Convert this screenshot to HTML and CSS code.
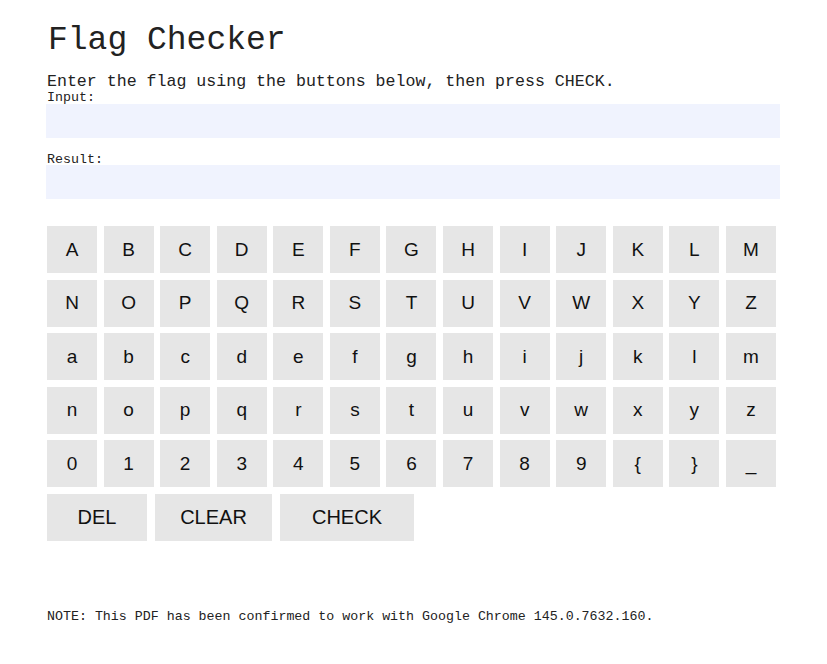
FILE: index.html
```html
<!DOCTYPE html>
<html>
<head>
<meta charset="utf-8">
<link rel="stylesheet" href="styles.css">
</head>
<body>
<div class="page">
  <h1 class="title">Flag Checker</h1>
  <p class="intro">Enter the flag using the buttons below, then press CHECK.</p>
  <div class="label">Input:</div>
  <div class="field"></div>
  <div class="label label-result">Result:</div>
  <div class="field"></div>
  <div class="keys">
    <div class="key">A</div><div class="key">B</div><div class="key">C</div><div class="key">D</div><div class="key">E</div><div class="key">F</div><div class="key">G</div><div class="key">H</div><div class="key">I</div><div class="key">J</div><div class="key">K</div><div class="key">L</div><div class="key">M</div>
    <div class="key">N</div><div class="key">O</div><div class="key">P</div><div class="key">Q</div><div class="key">R</div><div class="key">S</div><div class="key">T</div><div class="key">U</div><div class="key">V</div><div class="key">W</div><div class="key">X</div><div class="key">Y</div><div class="key">Z</div>
    <div class="key">a</div><div class="key">b</div><div class="key">c</div><div class="key">d</div><div class="key">e</div><div class="key">f</div><div class="key">g</div><div class="key">h</div><div class="key">i</div><div class="key">j</div><div class="key">k</div><div class="key">l</div><div class="key">m</div>
    <div class="key">n</div><div class="key">o</div><div class="key">p</div><div class="key">q</div><div class="key">r</div><div class="key">s</div><div class="key">t</div><div class="key">u</div><div class="key">v</div><div class="key">w</div><div class="key">x</div><div class="key">y</div><div class="key">z</div>
    <div class="key">0</div><div class="key">1</div><div class="key">2</div><div class="key">3</div><div class="key">4</div><div class="key">5</div><div class="key">6</div><div class="key">7</div><div class="key">8</div><div class="key">9</div><div class="key">{</div><div class="key">}</div><div class="key">_</div>
  </div>
  <div class="actions">
    <div class="key key-del">DEL</div>
    <div class="key key-clear">CLEAR</div>
    <div class="key key-check">CHECK</div>
  </div>
  <p class="note">NOTE: This PDF has been confirmed to work with Google Chrome 145.0.7632.160.</p>
</div>
</body>
</html>
```

FILE: styles.css
```css
html, body {
  margin: 0;
  padding: 0;
  background: #ffffff;
}
.page {
  padding: 24px 47px 0 47px;
  width: 733px;
  font-family: "Liberation Mono", "Courier New", monospace;
  color: #222222;
}
.title {
  margin: 0 0 0 1px;
  font-size: 33px;
  font-weight: normal;
  line-height: 33px;
  height: 49px;
}
.intro {
  margin: 0;
  font-size: 16.6px;
  line-height: 18px;
}
.label {
  font-size: 13.3px;
  line-height: 13px;
  height: 13px;
}
.label-result {
  margin-top: 15px;
  height: 12px;
}
.field {
  margin-left: -1px;
  height: 34px;
  background: #f0f3fe;
}
.keys {
  margin-top: 27px;
  width: 729px;
  display: grid;
  grid-template-columns: repeat(13, 50px);
  column-gap: 6.58px;
  row-gap: 6.5px;
  grid-auto-rows: 47px;
}
.key {
  background: #e6e6e6;
  display: flex;
  align-items: center;
  justify-content: center;
  font-family: "Liberation Sans", Arial, sans-serif;
  font-size: 19px;
  color: #111111;
}
.actions {
  margin-top: 6.5px;
  display: flex;
  height: 47px;
}
.key-del { width: 100px; }
.key-clear { width: 117px; margin-left: 8px; }
.key-check { width: 134px; margin-left: 8px; }
.actions .key { font-size: 20px; }
.note {
  margin: 69px 0 0 0;
  font-size: 13.3px;
  line-height: 14px;
}
```
